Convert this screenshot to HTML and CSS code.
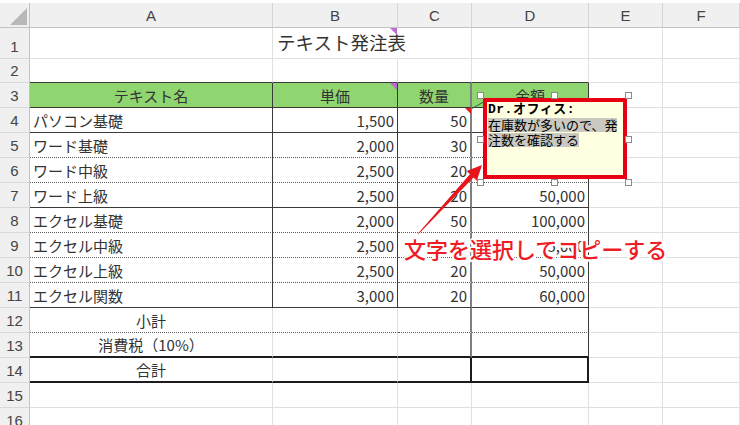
FILE: index.html
```html
<!DOCTYPE html>
<html lang="ja">
<head>
<meta charset="utf-8">
<title>テキスト発注表</title>
<link rel="stylesheet" href="styles.css">
</head>
<body>
<div class="page">
  <div class="sheet">
    <div class="corner"><i></i></div><div class="ch">A</div><div class="ch">B</div><div class="ch">C</div><div class="ch">D</div><div class="ch">E</div><div class="ch">F</div>

    <div class="rh">1</div><div class="c"></div><div class="c title nr mk-p">テキスト発注表</div><div class="c"></div><div class="c"></div><div class="c"></div><div class="c"></div>

    <div class="rh">2</div><div class="c bb"></div><div class="c bb"></div><div class="c bb"></div><div class="c bb"></div><div class="c"></div><div class="c"></div>

    <div class="rh">3</div><div class="c g br bb ctr">テキスト名</div><div class="c g br bb ctr mk-p">単価</div><div class="c g brg bb ctr">数量</div><div class="c g br bb ctr">金額</div><div class="c"></div><div class="c"></div>

    <div class="rh">4</div><div class="c br bb">パソコン基礎</div><div class="c br bb num">1,500</div><div class="c brg bb num mk-r">50</div><div class="c br bb num">75,000</div><div class="c"></div><div class="c"></div>

    <div class="rh">5</div><div class="c br bd">ワード基礎</div><div class="c br bd num">2,000</div><div class="c brg bd num">30</div><div class="c br bd num">60,000</div><div class="c"></div><div class="c"></div>

    <div class="rh">6</div><div class="c br bd">ワード中級</div><div class="c br bd num">2,500</div><div class="c brg bd num">20</div><div class="c br bd num">50,000</div><div class="c"></div><div class="c"></div>

    <div class="rh">7</div><div class="c br bb">ワード上級</div><div class="c br bb num">2,500</div><div class="c brg bb num">20</div><div class="c br bb num">50,000</div><div class="c"></div><div class="c"></div>

    <div class="rh">8</div><div class="c br bd">エクセル基礎</div><div class="c br bd num">2,000</div><div class="c brg bd num">50</div><div class="c br bd num">100,000</div><div class="c"></div><div class="c"></div>

    <div class="rh">9</div><div class="c br bd">エクセル中級</div><div class="c br bd num">2,500</div><div class="c brg bd num">30</div><div class="c br bd num">75,000</div><div class="c"></div><div class="c"></div>

    <div class="rh">10</div><div class="c br bd">エクセル上級</div><div class="c br bd num">2,500</div><div class="c brg bd num">20</div><div class="c br bd num">50,000</div><div class="c"></div><div class="c"></div>

    <div class="rh">11</div><div class="c br bb">エクセル関数</div><div class="c br bb num">3,000</div><div class="c brg bb num">20</div><div class="c br bb num">60,000</div><div class="c"></div><div class="c"></div>

    <div class="rh">12</div><div class="c bd ctr">小計</div><div class="c bd"></div><div class="c brg bd"></div><div class="c br bd"></div><div class="c"></div><div class="c"></div>

    <div class="rh">13</div><div class="c bb2 ctr">消費税（10%）</div><div class="c bb2"></div><div class="c brg bb2"></div><div class="c br bb2"></div><div class="c"></div><div class="c"></div>

    <div class="rh">14</div><div class="c bb2 ctr">合計</div><div class="c bb2"></div><div class="c br2 bb2"></div><div class="c br2 bb2"></div><div class="c"></div><div class="c"></div>

    <div class="rh">15</div><div class="c"></div><div class="c"></div><div class="c"></div><div class="c"></div><div class="c"></div><div class="c"></div>

    <div class="rh">16</div><div class="c"></div><div class="c"></div><div class="c"></div><div class="c"></div><div class="c"></div><div class="c"></div>
  </div>
</div>

<svg class="connector" width="740" height="425" viewBox="0 0 740 425">
  <line x1="472" y1="108.5" x2="487" y2="100" stroke="#2f5f2f" stroke-width="1"/>
</svg>

<div class="note">
  <div class="note-l1">Dr.オフィス:</div>
  <div class="note-l"><span class="sel">在庫数が多いので、発</span></div>
  <div class="note-l"><span class="sel">注数を確認する</span></div>
</div>

<div class="handle h1"></div><div class="handle h2"></div><div class="handle h3"></div>
<div class="handle h4"></div><div class="handle h5"></div>
<div class="handle h6"></div><div class="handle h7"></div><div class="handle h8"></div>

<svg class="arrow" width="740" height="425" viewBox="0 0 740 425">
  <polygon points="418,233.5 469.9,174.2 466.6,171.1 482,165 476.8,180.7 473.5,177.6 418.6,234" fill="#e8141c"/>
</svg>

<div class="callout">文字を選択してコピーする</div>
</body>
</html>
```

FILE: styles.css
```css
html, body {
  margin: 0;
  padding: 0;
}

body {
  position: relative;
  width: 740px;
  height: 425px;
  overflow: hidden;
  background: #ffffff;
  font-family: "Noto Sans CJK JP", sans-serif;
}

.page {
  padding-top: 3px;
}

.sheet {
  display: grid;
  grid-template-columns: 30px 243px 125px 74px 117px 74px 77px;
  grid-template-rows: 25px 31px 24px repeat(14, 25px);
}

/* headers */
.corner {
  position: relative;
  box-sizing: border-box;
  background: #f0f0f0;
  border-right: 1px solid #c3c3c3;
  border-bottom: 1px solid #c3c3c3;
}

.corner i {
  position: absolute;
  right: 2px;
  bottom: 2px;
  width: 17px;
  height: 17px;
  background: #b8b8b8;
  clip-path: polygon(100% 0, 100% 100%, 0 100%);
}

.ch {
  box-sizing: border-box;
  background: #f0f0f0;
  border-right: 1px solid #d5d5d5;
  border-bottom: 1px solid #c3c3c3;
  display: flex;
  align-items: center;
  justify-content: center;
  font-family: "Liberation Sans", "Noto Sans", sans-serif;
  font-size: 15px;
  color: #444444;
}

.rh {
  box-sizing: border-box;
  background: #f0f0f0;
  border-right: 1px solid #c3c3c3;
  border-bottom: 1px solid #d9d9d9;
  display: flex;
  align-items: flex-end;
  justify-content: center;
  padding-bottom: 2px;
  line-height: 18px;
  font-family: "Liberation Sans", "Noto Sans", sans-serif;
  font-size: 15px;
  color: #444444;
}

/* cells */
.c {
  position: relative;
  box-sizing: border-box;
  min-width: 0;
  border-right: 1px solid #e0e0e0;
  border-bottom: 1px solid #e0e0e0;
  display: flex;
  align-items: flex-end;
  padding: 0 3px 2px 3px;
  font-size: 15px;
  line-height: 18px;
  color: #333333;
  white-space: nowrap;
}

.num {
  justify-content: flex-end;
}

.ctr {
  justify-content: center;
}

.g {
  background: #8fd671;
}

.title {
  font-size: 18.5px;
  line-height: 22px;
  padding-left: 4px;
  padding-bottom: 5px;
  color: #333333;
}

.bb {
  border-bottom: 1px solid #3a3a3a;
}

.bd {
  border-bottom: 1px dotted #5a5a5a;
}

.bb2 {
  border-bottom: 2px solid #1c1c1c;
}

.br {
  border-right: 1px solid #3a3a3a;
}

.brg {
  border-right: 2px solid #808080;
}

.br2 {
  border-right: 2px solid #1c1c1c;
}

.nr {
  border-right-color: transparent;
}

/* comment indicators */
.mk-p::after {
  content: "";
  position: absolute;
  top: 0;
  right: 0;
  width: 0;
  height: 0;
  border-top: 7px solid #bb6bd9;
  border-left: 7px solid transparent;
}

.mk-r::after {
  content: "";
  position: absolute;
  top: 0;
  right: -1px;
  width: 0;
  height: 0;
  border-top: 6px solid #e0201c;
  border-left: 6px solid transparent;
}

/* overlays */
.connector,
.arrow {
  position: absolute;
  left: 0;
  top: 0;
  pointer-events: none;
}

.note {
  position: absolute;
  left: 483px;
  top: 98px;
  width: 144px;
  height: 81px;
  box-sizing: border-box;
  border: 4px solid #e60012;
  background: #ffffe1;
  padding: 0 0 0 1px;
  color: #000000;
  white-space: nowrap;
}

.note-l1 {
  height: 15px;
  font-family: "Liberation Mono", "Noto Sans CJK JP", monospace;
  font-weight: bold;
  font-size: 13px;
  line-height: 15px;
  letter-spacing: 0.5px;
}

.note-l {
  height: 15px;
  display: flex;
  align-items: center;
}

.sel {
  display: block;
  height: 14px;
  line-height: 14px;
  font-size: 13px;
  background: #c9c9c1;
}

.handle {
  position: absolute;
  width: 7px;
  height: 7px;
  box-sizing: border-box;
  background: #ffffff;
  border: 1px solid #8a8a8a;
}

.h1 { left: 477px; top: 92px; }
.h2 { left: 551px; top: 92px; }
.h3 { left: 625px; top: 92px; }
.h4 { left: 477px; top: 136px; }
.h5 { left: 625px; top: 136px; }
.h6 { left: 477px; top: 179px; }
.h7 { left: 551px; top: 179px; }
.h8 { left: 625px; top: 179px; }

.callout {
  position: absolute;
  left: 404px;
  top: 235px;
  font-size: 22px;
  line-height: 26px;
  font-weight: 500;
  color: #ee1c24;
  white-space: nowrap;
  text-shadow:
    2px 0 0 #fff, -2px 0 0 #fff, 0 2px 0 #fff, 0 -2px 0 #fff,
    1.5px 1.5px 0 #fff, -1.5px 1.5px 0 #fff, 1.5px -1.5px 0 #fff, -1.5px -1.5px 0 #fff,
    1px 2px 0 #fff, -1px 2px 0 #fff, 2px 1px 0 #fff, -2px 1px 0 #fff;
}
```
